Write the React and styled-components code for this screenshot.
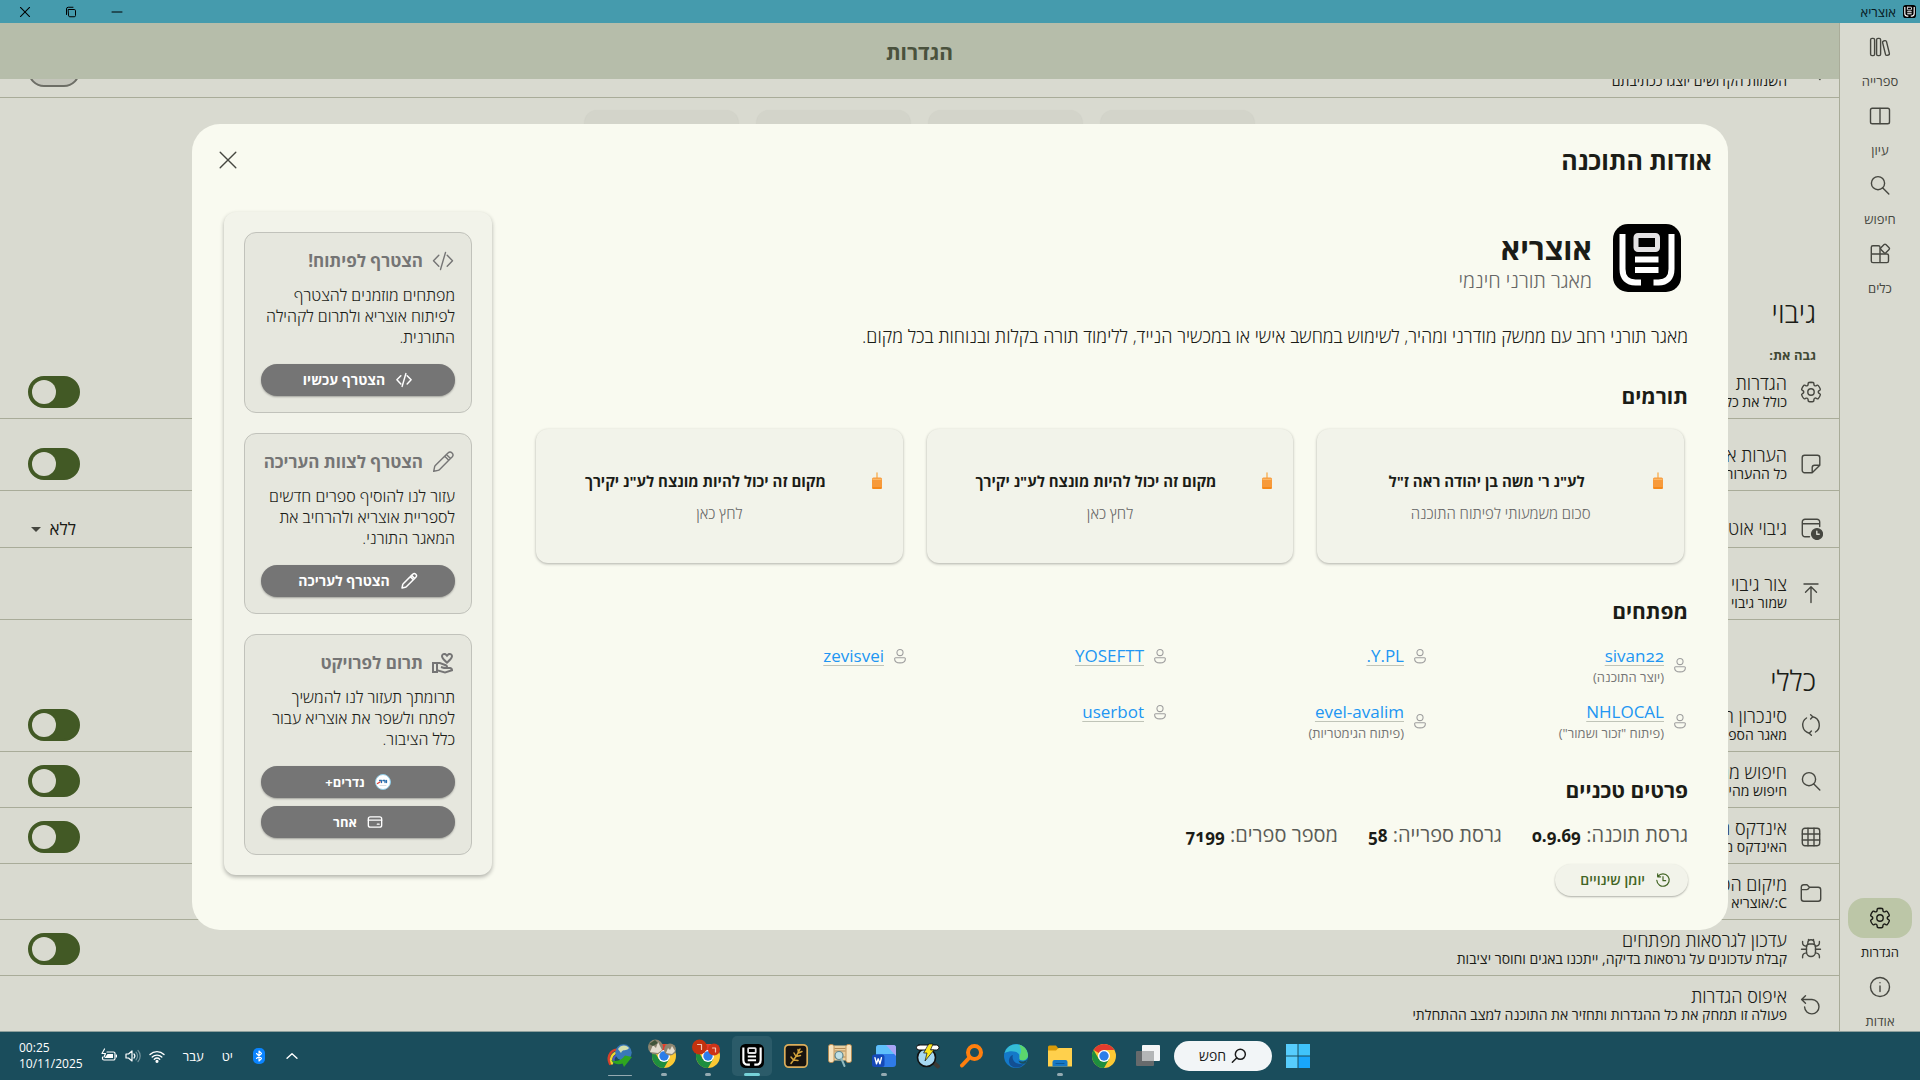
import React from "react";
import styled, { createGlobalStyle } from "styled-components";
import { MdOutlineVolunteerActivism } from "react-icons/md";

const GlobalStyle = createGlobalStyle`
  * {
    box-sizing: border-box;
  }

  body {
    margin: 0;
    font-family: "Open Sans", "Noto Sans", sans-serif;
    color: #1b1c17;
  }

  button,
  select {
    font-family: inherit;
    color: inherit;
    border: none;
    background: none;
    padding: 0;
    cursor: pointer;
  }

  h1,
  h2,
  h3,
  p {
    margin: 0;
  }
`;

const Svg = styled.svg`
  display: block;
  flex: none;
  width: ${(p) => p.$size}px;
  height: ${(p) => p.$size}px;
  fill: none;
  stroke: currentColor;
  stroke-width: ${(p) => p.$stroke};
  stroke-linecap: round;
  stroke-linejoin: round;
`;

const shapes = {
  library: (
    <>
      <rect x="2.6" y="3.4" width="4" height="17.2" rx="1.4" />
      <rect x="8.6" y="3.4" width="4" height="17.2" rx="1.4" />
      <rect x="16" y="5.6" width="4" height="14.8" rx="1.4" transform="rotate(-14 18 13)" />
    </>
  ),
  book: (
    <>
      <rect x="2.5" y="4.3" width="19" height="15.4" rx="1.8" />
      <path d="M12 4.5v15" />
    </>
  ),
  search: (
    <>
      <circle cx="10" cy="10.2" r="6.6" />
      <path d="m14.8 15 6 6" />
    </>
  ),
  tools: (
    <>
      <path d="M12 12V5.3c0-.9-.7-1.6-1.6-1.6H4.9c-.9 0-1.6.7-1.6 1.6V19c0 .9.7 1.6 1.6 1.6h14c.9 0 1.6-.7 1.6-1.6v-5.4c0-.9-.7-1.6-1.6-1.6H3.3M12 12v8.6" />
      <rect x="13.5" y="3.2" width="7" height="7" rx="1.2" transform="rotate(45 17 6.7)" />
    </>
  ),
  settings: (
    <>
      <path d="M12.01 2.25c.74 0 1.47.1 2.18.25.32.07.55.33.59.65l.17 1.53a1.38 1.38 0 0 0 1.92 1.11l1.4-.61c.3-.13.64-.06.85.17a9.8 9.8 0 0 1 2.2 3.8c.1.3 0 .63-.26.82l-1.25.92a1.38 1.38 0 0 0 0 2.22l1.25.92c.26.19.36.52.27.82a9.8 9.8 0 0 1-2.2 3.8.75.75 0 0 1-.85.17l-1.4-.62a1.38 1.38 0 0 0-1.93 1.12l-.17 1.52a.75.75 0 0 1-.58.65 9.5 9.5 0 0 1-4.4 0 .75.75 0 0 1-.57-.65l-.17-1.52a1.38 1.38 0 0 0-1.93-1.11l-1.4.62a.75.75 0 0 1-.85-.18 9.8 9.8 0 0 1-2.2-3.8c-.1-.3 0-.63.27-.82l1.24-.92a1.38 1.38 0 0 0 0-2.22l-1.24-.92a.75.75 0 0 1-.28-.82 9.8 9.8 0 0 1 2.2-3.8c.23-.23.57-.3.86-.17l1.4.62c.4.17.86.15 1.25-.08.38-.22.63-.6.68-1.04l.17-1.53a.75.75 0 0 1 .58-.65c.72-.16 1.45-.24 2.2-.25Z" />
      <circle cx="12" cy="12" r="3.2" />
    </>
  ),
  info: (
    <>
      <circle cx="12" cy="12" r="9.5" />
      <path d="M12 11v5.6M12 7.6v.2" />
    </>
  ),
  note: (
    <path d="M13.2 20.7H5.6A2.4 2.4 0 0 1 3.2 18.3V5.7A2.4 2.4 0 0 1 5.6 3.3H18.4A2.4 2.4 0 0 1 20.8 5.7V13.2L13.2 20.7V15.6A2.4 2.4 0 0 1 15.6 13.2H20.8" />
  ),
  calendar: (
    <>
      <path d="M10.5 20.7H6A2.7 2.7 0 0 1 3.3 18V6A2.7 2.7 0 0 1 6 3.3H18A2.7 2.7 0 0 1 20.7 6V10.5M3.3 7.7H20.7" />
      <circle cx="18" cy="18" r="5.4" fill="currentColor" />
      <path d="M17.8 15.2V18.200H20.200" stroke="#d9dad0" />
    </>
  ),
  upload: <path d="M5 3h14M12 21.5V6M6.500 11.300 12 5.800l5.500 5.500" />,
  sync: (
    <path d="M13.8 3.8A8.4 8.4 0 0 1 16.500 19M10.200 20.200A8.400 8.400 0 0 1 7.500 5M11.600 1.800l2.200 2-2.200 2.200M12.400 18l-2.200 2.200 2.200 2" />
  ),
  grid: (
    <>
      <rect x="3.3" y="3.3" width="17.4" height="17.4" rx="2.6" />
      <path d="M9 3.3v17.4M15 3.3v17.4M3.3 9h17.4M3.3 15h17.4" />
    </>
  ),
  folder: (
    <path d="M2.3 8.3V6A2.5 2.5 0 0 1 4.8 3.7H8L10.5 6.2H19.2A2.5 2.5 0 0 1 21.7 8.7V17.8A2.5 2.5 0 0 1 19.2 20.3H4.8A2.5 2.5 0 0 1 2.3 17.8V8.6H7.7C8.5 8.6 9 8.3 9.4 7.8L10.5 6.2" />
  ),
  bug: (
    <>
      <path d="M7.5 10A3 3 0 0 1 10.5 7H13.5A3 3 0 0 1 16.5 10V15A4.5 4.5 0 0 1 7.5 15Z" />
      <path d="M8.8 7V6a3.2 3.2 0 0 1 6.4 0v1M9.5 3.6V2.5M14.5 3.6V2.5M2.5 12.2h5M16.5 12.2h5M3.6 4.5V6c0 1.8 1.7 3 4 3.3M20.4 4.5V6c0 1.800-1.700 3-4 3.300M3.600 20.800v-1.600c0-1.800 1.700-3 4-3.300M20.400 20.800v-1.600c0-1.800-1.700-3-4-3.300" />
    </>
  ),
  reset: <path d="M6.500 2.700 2.600 6.500l3.900 3.800M2.800 6.500H13A7.200 7.200 0 1 1 5.600 14" />,
  textSearch: (
    <>
      <path d="M3 5h15M3 10h6M3 15h5" />
      <circle cx="15" cy="14" r="4" />
      <path d="m18 17 3 3.500" />
    </>
  ),
  code: <path d="m7.800 6.300-5.300 5.500 5.300 5.500M16.200 6.300l5.300 5.500-5.300 5.500M14.500 3.500 9.500 20.500" />,
  pencil: (
    <path d="M15.4 4.5 4.3 15.6C3.9 16 3.7 16.4 3.6 16.9L2.7 21.3 7.1 20.4C7.6 20.3 8 20.1 8.4 19.7L19.5 8.6M15.4 4.5L17 2.9A2.9 2.9 0 0 1 21.1 7L19.5 8.6ZM13.7 6.2L17.8 10.3" />
  ),
  card: (
    <>
      <rect x="2" y="4.2" width="20" height="15.6" rx="3" />
      <path d="M2 9.3h20M15.5 15.3h2.7" />
    </>
  ),
  history: <path d="M4.5 6.5A9.3 9.3 0 1 1 2.7 12.5M4 2.8V7.2H8.4M12 7v6h4" />,
  person: (
    <>
      <circle cx="12" cy="6.800" r="4.600" />
      <path d="M5.500 14.500H18.500A1.600 1.600 0 0 1 20.100 16.100C20.100 20 16.500 22.300 12 22.300S3.900 20 3.900 16.100A1.600 1.600 0 0 1 5.500 14.500Z" />
    </>
  ),
  close: <path d="m4.2 4.2 15.6 15.6M19.8 4.2 4.2 19.8" />,
  minimize: <path d="M2 12h20" />,
  restore: (
    <path d="M7 7h11.500A2.500 2.500 0 0 1 21 9.500V19A2.500 2.500 0 0 1 18.500 21.500H9.500A2.500 2.500 0 0 1 7 19ZM3 17V6A3.500 3.500 0 0 1 6.500 2.500H16" />
  ),
  chevron: <path d="m3.500 16 8.500-8 8.500 8" />,
};

const Icon = ({ name, size = 24, stroke = 1.4 }) => (
  <Svg viewBox="0 0 24 24" $size={size} $stroke={stroke} aria-hidden="true">
    {shapes[name]}
  </Svg>
);

const Logo = ({ size }) => (
  <Svg viewBox="0 0 68 68" $size={size} $stroke={0} aria-hidden="true">
    <rect width="68" height="68" rx="15" fill="#000" />
    <path
      d="M9.500 10v35c0 9 5 13.500 13 13.500h5.500M58.500 10v35c0 9-5 13.500-13 13.500h-5"
      stroke="#fff"
      strokeWidth="6"
      strokeLinecap="butt"
    />
    <rect x="23" y="11.500" width="21.500" height="14" rx="2" stroke="#e3e1e3" strokeWidth="5" />
    <path d="M22 35.500h23.500M22 46h23.500" stroke="#fff" strokeWidth="6" strokeLinecap="butt" />
  </Svg>
);

const Candle = () => (
  <Svg viewBox="0 0 20 20" $size={20} $stroke={0} aria-hidden="true">
    <path d="M10 2v5" stroke="#f6b96a" strokeWidth="1.6" />
    <rect x="5" y="6.5" width="10" height="11.500" rx="1.500" fill="#f79a3b" />
    <path d="M6 8.300h8" stroke="#fbb768" strokeWidth="1.200" />
    <path d="M6 17h8" stroke="#f58410" strokeWidth="1.400" />
  </Svg>
);

const Screen = styled.div`
  height: 100vh;
  display: flex;
  flex-direction: column;
  overflow: hidden;
`;

const TitleBar = styled.header`
  flex: none;
  height: 23px;
  padding: 0 4px 0 18px;
  display: flex;
  align-items: center;
  justify-content: space-between;
  background: #459bad;
  color: #06181c;
  font-size: 13px;
  line-height: 16px;
`;

const AppName = styled.div`
  display: flex;
  align-items: center;
  gap: 7px;
`;

const WindowControls = styled.div`
  display: flex;
  flex-direction: row-reverse;
  gap: 32px;

  button {
    width: 14px;
    height: 14px;
    display: grid;
    place-items: center;
    color: #000;
  }
`;

const Window = styled.div`
  position: relative;
  flex: 1;
  min-height: 0;
  display: flex;
  background: #d9dad0;
`;

const NavRail = styled.nav`
  flex: none;
  width: 81px;
  padding: 4px 0 2px;
  border-left: 1px solid #a9ac99;
  display: flex;
  flex-direction: column;
  gap: 7px;
`;

const NavSpacer = styled.div`
  flex: 1;
`;

const NavItem = styled.button`
  display: flex;
  flex-direction: column;
  align-items: center;
  gap: 6px;
  font-size: 13px;
  line-height: 16px;
  color: ${(p) => (p.$active ? "#1b1c17" : "#464740")};
`;

const NavPill = styled.span`
  width: 64px;
  height: 40px;
  border-radius: 16px;
  display: grid;
  place-items: center;
  background: ${(p) => (p.$active ? "#bcc6a7" : "transparent")};
`;

const Settings = styled.main`
  flex: 1;
  min-width: 0;
  display: flex;
  flex-direction: column;
`;

const SettingsHeader = styled.h1`
  flex: none;
  height: 56px;
  padding-top: 2px;
  display: grid;
  place-items: center;
  background: #b6bdaa;
  color: #4a523d;
  font-size: 21px;
  line-height: 28px;
`;

const Scroller = styled.div`
  flex: 1;
  min-height: 0;
  overflow: hidden;
`;

/* the list is scrolled part of the way down */
const SettingsList = styled.div`
  margin-top: -37px;
`;

const Shortcuts = styled.div`
  display: flex;
  justify-content: center;
  gap: 19px;
  padding: 12px 0 46px;
`;

const Shortcut = styled.div`
  width: 153px;
  height: 140px;
  border-radius: 12px;
  background: #d3d4ca;
  box-shadow: 0 1px 2px rgba(0, 0, 0, 0.12);
`;

const GroupTitle = styled.h2`
  padding: ${(p) => (p.$spaced ? "44px" : 0)} 23px 0;
  font-size: 28px;
  line-height: 32px;
  font-weight: 300;
`;

const GroupLabel = styled.h3`
  padding: 19px 23px 0;
  font-size: 13px;
  line-height: 16px;
  color: #414935;
`;

const SettingRow = styled.div`
  height: ${(p) => (p.$single ? 41 : 56)}px;
  margin-top: ${(p) => (p.$gap ? 16 : 0)}px;
  padding: 2px 16px 0 28px;
  border-bottom: 1px solid #a9ac99;
  display: flex;
  align-items: center;
  gap: 12px;
  color: #464740;
`;

const SettingText = styled.div`
  flex: 1;
  color: #1b1c17;
  font-size: 14px;
  line-height: 18px;

  strong {
    display: block;
    font-size: 18px;
    line-height: 20px;
    font-weight: 300;
  }
`;

const Switch = styled.input`
  appearance: none;
  flex: none;
  position: relative;
  width: 52px;
  height: 32px;
  margin: 0;
  border-radius: 16px;
  border: 2px solid ${(p) => (p.defaultChecked ? "#425925" : "#6d6e66")};
  background: ${(p) => (p.defaultChecked ? "#425925" : "#c4c5bb")};

  &:checked::after {
    content: "";
    position: absolute;
    left: 2px;
    top: 2px;
    width: 24px;
    height: 24px;
    border-radius: 50%;
    background: #d9dad0;
  }
`;

const SelectBox = styled.label`
  display: flex;
  align-items: center;
  gap: 8px;
  padding: 2px 0 0 3px;

  select {
    appearance: none;
    font-size: 17px;
    line-height: 24px;
    color: #1b1c17;
  }
`;

const Arrow = styled.span`
  border: 5px solid transparent;
  border-top-color: #464740;
  border-bottom: none;
`;

const Overlay = styled.div`
  position: absolute;
  inset: 0;
  display: grid;
  place-items: center;
`;

const Dialog = styled.section`
  width: 80%;
  height: 80%;
  border-radius: 28px;
  background: #f9faf0;
`;

const DialogHeader = styled.div`
  height: 72px;
  padding: 0 16px 0 24px;
  display: flex;
  align-items: center;
  justify-content: space-between;

  h2 {
    font-size: 25px;
    line-height: 32px;
  }
`;

const CloseButton = styled.button`
  width: 24px;
  height: 24px;
  color: #464740;
`;

const DialogBody = styled.div`
  display: flex;
  align-items: flex-start;
  gap: 40px;
  padding: 16px 40px 0 32px;
`;

const About = styled.div`
  flex: 1;
  min-width: 0;
  padding-top: 6px;
`;

const Brand = styled.div`
  height: 80px;
  display: flex;
  align-items: center;
  gap: 14px;
`;

const LogoBox = styled.div`
  width: 82px;
  height: 80px;
  display: grid;
  place-items: center;
`;

const BrandText = styled.div`
  padding-top: 8px;
  font-size: 20px;
  line-height: 26px;
  font-weight: 300;
  color: #666;

  strong {
    display: block;
    font-size: 30px;
    line-height: 38px;
    font-weight: 700;
    color: #1b1c17;
  }
`;

const Intro = styled.p`
  margin-top: 26px;
  font-size: 18px;
  line-height: 24px;
  font-weight: 300;
`;

const SectionTitle = styled.h3`
  margin: 34px 0 19px;
  font-size: 21px;
  line-height: 28px;
`;

const Donors = styled.div`
  display: grid;
  grid-template-columns: repeat(3, 1fr);
  gap: 24px;
  padding: 0 4px;
`;

const DonorCard = styled.article`
  height: 134px;
  padding: 2px 16px 0;
  border-radius: 12px;
  background: #f2f3ea;
  box-shadow: 0 1px 3px rgba(0, 0, 0, 0.3);
  display: flex;
  flex-direction: column;
  justify-content: center;
  gap: 11px;
  text-align: center;
  font-size: 15px;
  line-height: 20px;
  font-weight: 300;
  color: #666;
`;

const DonorTitle = styled.div`
  display: flex;
  align-items: center;
  gap: 8px;
  color: #1b1c17;
  line-height: 22px;

  strong {
    flex: 1;
    font-weight: 700;
  }
`;

const Developers = styled.ul`
  margin: 0;
  padding: 0;
  list-style: none;
  display: grid;
  grid-template-columns: repeat(auto-fill, 244px);
  gap: 14px 16px;
`;

const Developer = styled.li`
  display: flex;
  align-items: center;
  align-self: start;
  gap: 8px;
  color: #9e9e9e;
`;

const DeveloperText = styled.div`
  font-size: 13px;
  line-height: 18px;
  color: #757575;
`;

const DeveloperLink = styled.a`
  display: block;
  width: fit-content;
  font-size: 17px;
  line-height: 24px;
  color: #2196f3;
  text-decoration: underline;
  text-decoration-color: #c0c4b8;
  text-underline-offset: 3px;
  font-variant-numeric: oldstyle-nums;
`;

const Stats = styled.div`
  display: flex;
  gap: 30px;
  font-size: 20px;
  line-height: 24px;
  color: #5b5c57;

  strong {
    font-size: 17px;
    color: #1b1c17;
    font-variant-numeric: oldstyle-nums;
  }
`;

const ChangelogButton = styled.button`
  height: 32px;
  margin-top: 16px;
  padding: 0 17px 0 25px;
  border-radius: 16px;
  display: flex;
  align-items: center;
  gap: 10px;
  background: #f2f3ea;
  box-shadow: 0 1px 2px rgba(0, 0, 0, 0.3);
  color: #436525;
  font-size: 14px;
  line-height: 20px;
  font-weight: 600;
`;

const JoinPanel = styled.aside`
  flex: none;
  width: 268px;
  padding: 20px;
  border-radius: 12px;
  background: #f2f3ea;
  box-shadow: 0 2px 4px rgba(0, 0, 0, 0.3);
  display: flex;
  flex-direction: column;
  gap: 20px;
`;

const JoinCard = styled.article`
  padding: 16px;
  border: 1px solid #c1c2bb;
  border-radius: 12px;
  background: #e6e7de;
  font-size: 16px;
  line-height: 21px;
  font-weight: 300;
`;

const JoinTitle = styled.h3`
  display: flex;
  align-items: center;
  gap: 8px;
  margin-bottom: 12px;
  font-size: 17px;
  line-height: 24px;
  color: #757575;
  white-space: nowrap;
`;

const JoinActions = styled.div`
  display: flex;
  flex-direction: column;
  gap: 8px;
  margin-top: 16px;
`;

const JoinButton = styled.button`
  height: 32px;
  border-radius: 16px;
  display: flex;
  align-items: center;
  justify-content: center;
  gap: 10px;
  background: #757575;
  box-shadow: 0 1px 2px rgba(0, 0, 0, 0.3);
  color: #fff;
  font-size: ${(p) => (p.$small ? 13 : 14)}px;
  line-height: 20px;
  font-weight: 700;
`;

const TaskBar = styled.footer`
  flex: none;
  height: 49px;
  border-top: 1px solid #8d9f9c;
  display: grid;
  grid-template-columns: 1fr auto 1fr;
  align-items: center;
  background: #1a4d5c;
  color: #fff;
`;

const TaskButtons = styled.div`
  grid-column: 2;
  padding-right: 2px;
  display: flex;
  align-items: center;
  gap: 4px;
`;

const TaskButton = styled.button`
  width: 40px;
  height: 40px;
  border-radius: 5px;
  display: flex;
  flex-direction: column;
  align-items: center;
  justify-content: flex-end;
  gap: 5px;
  background: ${(p) => (p.$active ? "#2b5b69" : "transparent")};
`;

const Indicator = styled.span`
  width: ${(p) => ({ active: 16, wide: 24 }[p.$kind] || 6)}px;
  height: ${(p) => (p.$kind === "wide" ? 1 : 3)}px;
  margin-top: ${(p) => (p.$kind === "wide" ? 2 : 0)}px;
  border-radius: 2px;
  background: ${(p) => (p.$kind === "active" ? "#76d2d8" : "#94aab1")};
  visibility: ${(p) => (p.$kind ? "visible" : "hidden")};
`;

const SearchPill = styled.button`
  width: 98px;
  height: 30px;
  margin: 0 2px;
  border-radius: 15px;
  display: flex;
  align-items: center;
  justify-content: center;
  gap: 5px;
  background: #f2f5f7;
  color: #1b1b1b;
  font-size: 14px;
  line-height: 20px;
`;

const Tray = styled.div`
  grid-column: 3;
  justify-self: end;
  display: flex;
  align-items: center;
  gap: 18px;
  padding-left: 19px;
  font-size: 13px;
  line-height: 16px;
`;

const QuickStatus = styled.div`
  display: flex;
  align-items: center;
  gap: 8px;
`;

const Clock = styled.time`
  direction: ltr;
  font-size: 12px;
`;

const TaskArt = ({ children }) => (
  <Svg viewBox="0 0 24 24" $size={24} $stroke={0} aria-hidden="true">
    {children}
  </Svg>
);

const chromeShapes = (
  <>
    <circle cx="12" cy="12" r="12" fill="#fcc934" />
    <path d="M12 12 1.6 6A12 12 0 0 1 22.400 6H12Z" fill="#e33b2e" />
    <path d="M1.600 6A12 12 0 0 0 12 24L17.200 15 6.800 15Z" fill="#1e8e3e" />
    <circle cx="12" cy="12" r="6" fill="#fff" />
    <circle cx="12" cy="12" r="4.700" fill="#2b7de9" />
  </>
);

const taskItems = [
  {
    label: "תצוגת משימות",
    art: (
      <>
        <rect x="6" y="1" width="18" height="16" rx="1" fill="#f4f5f6" />
        <rect y="7" width="18" height="15" rx="1" fill="#666a6c" />
        <rect x="6" y="7" width="12" height="10" fill="#b4b6b7" />
      </>
    ),
  },
  { label: "Chrome", art: chromeShapes },
  {
    label: "סייר הקבצים",
    kind: "open",
    art: (
      <>
        <path d="M0 3a1.500 1.500 0 0 1 1.500-1.500H8L10 4v6H0Z" fill="#d99b08" />
        <path d="M0 6.500H8L10.500 4H24V22.500H0Z" fill="#ffd04c" />
        <path d="M4.500 22.500V18A2 2 0 0 1 6.500 16H17.500A2 2 0 0 1 19.500 18V22.500Z" fill="#1878c4" />
        <path d="M8 19.500h8" stroke="#0c5795" strokeWidth="1.200" />
      </>
    ),
  },
  {
    label: "Edge",
    art: (
      <>
        <circle cx="12" cy="12" r="12" fill="#1479c9" />
        <path
          d="M.5 9A12 12 0 0 1 24 11C24 15 20.500 17 17 16 14.500 15.500 15.500 14 15.500 12 15.500 8 8 5.500 .5 9Z"
          fill="#35bdd6"
        />
        <path d="M15 .500A12 12 0 0 1 24 11C24 15 20.500 17 17 16 15 15.500 16 14 15.500 11.500 18 8 17 4 15 .500Z" fill="#5bd66d" />
        <path d="M9 11C7 16 12 21.500 20 20 15 26 4 24 5 16 5.500 13 7 11.500 9 11Z" fill="#124f93" />
        <path d="M14.500 16.500c2.500 1.800 6.500 1 9-1.300l-2 4c-3.500 1.500-6 .300-7-2.700Z" fill="#1a4d5c" />
      </>
    ),
  },
  {
    label: "Everything",
    art: (
      <>
        <circle cx="14.500" cy="8.500" r="6.500" stroke="#ff7f0e" strokeWidth="4" />
        <path d="M9.500 13.500 2 21.500" stroke="#ff7f0e" strokeWidth="4" strokeLinecap="round" />
      </>
    ),
  },
  {
    label: "חיפוש מהיר",
    art: (
      <>
        <path d="M17 18l5 4.500" stroke="#3d3a35" strokeWidth="4" />
        <circle cx="10.500" cy="13.500" r="9" fill="#a5d8f2" stroke="#111" strokeWidth="1.600" />
        <rect x=".5" y="1" width="22.500" height="5" rx="2.500" fill="#fff" stroke="#111" strokeWidth="1" />
        <path d="M13 0H17L14.500 6H18L9 17 11 9H8Z" fill="#fbe61c" stroke="#111" strokeWidth=".7" />
      </>
    ),
  },
  {
    label: "Word",
    kind: "open",
    art: (
      <>
        <rect x="4" y="1" width="20" height="22" rx="3" fill="#2f7be8" />
        <path d="M4 4a3 3 0 0 1 3-3H21a3 3 0 0 1 3 3V10H4Z" fill="#5fc0fb" />
        <path d="M14 1h7a3 3 0 0 1 3 3v8Z" fill="#a9a4f6" />
        <rect y="10.500" width="12.500" height="12.500" rx="2.500" fill="#1549b8" />
        <path d="m3 13.800 1.500 6 1.700-5 1.700 5 1.500-6" stroke="#fff" strokeWidth="1.400" />
      </>
    ),
  },
  {
    label: "מאגר כתבים",
    art: (
      <>
        <rect x="2" y="1.500" width="20" height="15" fill="#e9cf9f" />
        <path d="M7 4.500h10M7 7h10M7 13h10" stroke="#b38a55" strokeWidth="1" />
        <rect x=".5" y=".5" width="5.500" height="18" rx="2" fill="#f6e3be" stroke="#b98646" strokeWidth=".8" />
        <rect x="18" y=".5" width="5.500" height="18" rx="2" fill="#f6e3be" stroke="#b98646" strokeWidth=".8" />
        <circle cx="11" cy="11.500" r="4" fill="#bfe0e6" stroke="#5f858c" strokeWidth="1.200" />
        <path d="m13.500 15 3 7" stroke="#8fb8bd" strokeWidth="2" />
      </>
    ),
  },
  {
    label: "ספרייה",
    art: (
      <>
        <rect x=".8" y=".8" width="22.400" height="22.400" rx="4" fill="#17130f" stroke="#dcae5c" strokeWidth="1.700" />
        <path
          d="M7 19.500C10 15.500 13 12 16 5M9.500 16 7 13M9.500 16l4.500 .5M12 12.500 10 9M12 12.500l4.500-1M14.500 9l-.5-3.500M14.500 9l3.500-1.500"
          stroke="#d4a43c"
          strokeWidth="1.500"
        />
      </>
    ),
  },
  { label: "אוצריא", kind: "active", logo: true },
  {
    label: "Chrome ד",
    kind: "open",
    art: (
      <>
        {chromeShapes}
        <circle cx="3.500" cy="3" r="7.500" fill="#c3320f" />
        <circle cx="18" cy="5.500" r="6" fill="#cc3318" />
        <path d="M1.500 .5h4v5M16.500 4h3v4" stroke="#f3c3b2" strokeWidth="1.200" />
      </>
    ),
  },
  {
    label: "Chrome",
    kind: "open",
    art: (
      <>
        {chromeShapes}
        <circle cx="3.500" cy="3" r="7.500" fill="#8d8570" />
        <path d="M-2 8 1 1l3 3 2-6 4 8-4 3Z" fill="#e4ddcf" />
        <path d="M-3 0 3-4 6-1 1 2Z" fill="#41553a" />
        <circle cx="18" cy="5.500" r="6" fill="#8d8570" />
        <path d="m14 9 2-5 2 2 2-4 3 5-3 3Z" fill="#e4ddcf" />
      </>
    ),
  },
  {
    label: "IDM",
    kind: "wide",
    art: (
      <>
        <path d="M2 20C-2 12 4 4 12 6" stroke="#d6402a" strokeWidth="2.400" />
        <path d="M4 19.500C1 13 6 7 13 8" stroke="#f0d62e" strokeWidth="2.400" />
        <path d="M6 18C4 14 8 9.500 13 10" stroke="#4b55c0" strokeWidth="2" />
        <circle cx="15.500" cy="8.500" r="8.200" fill="#3a78b8" />
        <path d="M10 5c3-5 9-4 11-1-3 4-6 0-8 5Z" fill="#d3dfae" />
        <path d="M3 16c6 2.500 11 0 14-4.500l7 1.500-8 10-1.500-3.500c-4 1.500-9 .500-11.500-3.500Z" fill="#2fa61f" />
      </>
    ),
  },
];

const TaskArtBox = styled.span`
  svg {
    overflow: visible;
  }
`;

const navItems = [
  { icon: "library", label: "ספרייה" },
  { icon: "book", label: "עיון" },
  { icon: "search", label: "חיפוש" },
  { icon: "tools", label: "כלים" },
];

const backupRows = [
  { icon: "settings", title: "הגדרות", text: "כולל את כל ההגדרות", on: true },
  { icon: "note", title: "הערות אישיות", text: "כל ההערות האישיות", on: true, gap: true },
  { icon: "calendar", title: "גיבוי אוטומטי", select: true, gap: true },
  { icon: "upload", title: "צור גיבוי", text: "שמור גיבוי לקובץ", gap: true },
];

const generalRows = [
  { icon: "sync", title: "סינכרון הספרייה", text: "מאגר הספרים יתעדכן", on: true },
  { icon: "search", title: "חיפוש מהיר", text: "חיפוש מהיר באינדקס", on: true },
  { icon: "grid", title: "אינדקס החיפוש", text: "האינדקס מתעדכן", on: true },
  { icon: "folder", title: "מיקום הספרייה", text: "C:/אוצריא" },
  {
    icon: "bug",
    title: "עדכון לגרסאות מפתחים",
    text: "קבלת עדכונים על גרסאות בדיקה, ייתכנו באגים וחוסר יציבות",
    on: true,
  },
  {
    icon: "reset",
    title: "איפוס הגדרות",
    text: "פעולה זו תמחק את כל ההגדרות ותחזיר את התוכנה למצב ההתחלתי",
  },
];

const donors = [
  { title: 'לע"נ ר\' משה בן יהודה ראה ז"ל', text: "סכום משמעותי לפיתוח התוכנה" },
  { title: 'מקום זה יכול להיות מונצח לע"נ יקירך', text: "לחץ כאן" },
  { title: 'מקום זה יכול להיות מונצח לע"נ יקירך', text: "לחץ כאן" },
];

const developers = [
  { name: "sivan22", role: "(יוצר התוכנה)" },
  { name: "Y.PL." },
  { name: "YOSEFTT" },
  { name: "zevisvei" },
  { name: "NHLOCAL", role: '(פיתוח "זכור ושמור")' },
  { name: "evel-avalim", role: "(פיתוח הגימטריות)" },
  { name: "userbot" },
];

const stats = [
  ["גרסת תוכנה:", "0.9.69"],
  ["גרסת ספרייה:", "58"],
  ["מספר ספרים:", "7199"],
];

const Row = ({ icon, title, text, on, off, gap, select }) => (
  <SettingRow $gap={gap} $single={select}>
    <Icon name={icon} />
    <SettingText>
      <strong>{title}</strong>
      {text}
    </SettingText>
    {(on || off) && (
      <Switch type="checkbox" role="switch" aria-label={title} defaultChecked={!!on} />
    )}
    {select && (
      <SelectBox>
        <select aria-label={title}>
          <option>ללא</option>
        </select>
        <Arrow />
      </SelectBox>
    )}
  </SettingRow>
);

const NavLink = ({ icon, label, active }) => (
  <NavItem type="button" $active={active}>
    <NavPill $active={active}>
      <Icon name={icon} />
    </NavPill>
    {label}
  </NavItem>
);

const NedarimMark = () => (
  <Svg viewBox="0 0 16 16" $size={16} $stroke={0} aria-hidden="true">
    <circle cx="8" cy="8" r="7.500" fill="#fff" stroke="#8fcbe6" strokeWidth="1" />
    <path d="M4.500 6.500h2v2M8 6.500h2v2M11.500 6.500v2" stroke="#2b6fae" strokeWidth="1.300" />
    <path d="M2.500 9.500 5 8" stroke="#e0463c" strokeWidth="1.400" />
    <path d="M5 11.500h6" stroke="#cfd6da" strokeWidth=".8" />
  </Svg>
);

const AboutDialog = () => (
  <Dialog role="dialog" aria-labelledby="about-title">
    <DialogHeader>
      <h2 id="about-title">אודות התוכנה</h2>
      <CloseButton type="button" aria-label="סגור">
        <Icon name="close" />
      </CloseButton>
    </DialogHeader>
    <DialogBody>
      <About>
        <Brand>
          <LogoBox>
            <Logo size={68} />
          </LogoBox>
          <BrandText>
            <strong>אוצריא</strong>
            מאגר תורני חינמי
          </BrandText>
        </Brand>
        <Intro>
          מאגר תורני רחב עם ממשק מודרני ומהיר, לשימוש במחשב אישי או במכשיר הנייד,
          ללימוד תורה בקלות ובנוחות בכל מקום.
        </Intro>
        <SectionTitle>תורמים</SectionTitle>
        <Donors>
          {donors.map((donor, i) => (
            <DonorCard key={i}>
              <DonorTitle>
                <Candle />
                <strong>{donor.title}</strong>
              </DonorTitle>
              {donor.text}
            </DonorCard>
          ))}
        </Donors>
        <SectionTitle>מפתחים</SectionTitle>
        <Developers>
          {developers.map((dev) => (
            <Developer key={dev.name}>
              <Icon name="person" size={16} stroke={1.6} />
              <DeveloperText>
                <DeveloperLink href="#">{dev.name}</DeveloperLink>
                {dev.role}
              </DeveloperText>
            </Developer>
          ))}
        </Developers>
        <SectionTitle>פרטים טכניים</SectionTitle>
        <Stats>
          {stats.map(([label, value]) => (
            <span key={label}>
              {label} <strong>{value}</strong>
            </span>
          ))}
        </Stats>
        <ChangelogButton type="button">
          <Icon name="history" size={16} stroke={1.8} />
          יומן שינויים
        </ChangelogButton>
      </About>
      <JoinPanel>
        <JoinCard>
          <JoinTitle>
            <Icon name="code" />
            הצטרף לפיתוח!
          </JoinTitle>
          מפתחים מוזמנים להצטרף לפיתוח אוצריא ולתרום לקהילה התורנית.
          <JoinActions>
            <JoinButton type="button">
              <Icon name="code" size={18} stroke={2} />
              הצטרף עכשיו
            </JoinButton>
          </JoinActions>
        </JoinCard>
        <JoinCard>
          <JoinTitle>
            <Icon name="pencil" />
            הצטרף לצוות העריכה
          </JoinTitle>
          עזור לנו להוסיף ספרים חדשים לספריית אוצריא ולהרחיב את המאגר התורני.
          <JoinActions>
            <JoinButton type="button">
              <Icon name="pencil" size={18} stroke={2} />
              הצטרף לעריכה
            </JoinButton>
          </JoinActions>
        </JoinCard>
        <JoinCard>
          <JoinTitle>
            <MdOutlineVolunteerActivism size={24} />
            תרום לפרויקט
          </JoinTitle>
          תרומתך תעזור לנו להמשיך לפתח ולשפר את אוצריא עבור כלל הציבור.
          <JoinActions>
            <JoinButton type="button" $small>
              <NedarimMark />
              נדרים+
            </JoinButton>
            <JoinButton type="button" $small>
              <Icon name="card" size={16} stroke={2} />
              אחר
            </JoinButton>
          </JoinActions>
        </JoinCard>
      </JoinPanel>
    </DialogBody>
  </Dialog>
);

const App = () => (
  <Screen dir="rtl" lang="he">
    <GlobalStyle />
    <TitleBar>
      <AppName>
        <Logo size={13} />
        אוצריא
      </AppName>
      <WindowControls>
        <button type="button" aria-label="סגור חלון">
          <Icon name="close" size={14} stroke={1.8} />
        </button>
        <button type="button" aria-label="שחזר">
          <Icon name="restore" size={12} stroke={2} />
        </button>
        <button type="button" aria-label="מזער">
          <Icon name="minimize" size={12} stroke={2} />
        </button>
      </WindowControls>
    </TitleBar>
    <Window>
      <NavRail>
        {navItems.map((item) => (
          <NavLink key={item.icon} {...item} />
        ))}
        <NavSpacer />
        <NavLink icon="settings" label="הגדרות" active />
        <NavLink icon="info" label="אודות" />
      </NavRail>
      <Settings>
        <SettingsHeader>הגדרות</SettingsHeader>
        <Scroller>
          <SettingsList>
            <Row icon="textSearch" title="שמות הקודש" text="השמות הקדושים יוצגו ככתיבתם" off />
            <Shortcuts>
              <Shortcut />
              <Shortcut />
              <Shortcut />
              <Shortcut />
            </Shortcuts>
            <GroupTitle>גיבוי</GroupTitle>
            <GroupLabel>גבה את:</GroupLabel>
            {backupRows.map((row) => (
              <Row key={row.icon} {...row} />
            ))}
            <GroupTitle $spaced>כללי</GroupTitle>
            {generalRows.map((row) => (
              <Row key={row.icon} {...row} />
            ))}
          </SettingsList>
        </Scroller>
      </Settings>
      <Overlay>
        <AboutDialog />
      </Overlay>
    </Window>
    <TaskBar>
      <TaskButtons>
        <TaskButton type="button" aria-label="התחל">
          <TaskArt>
            <path d="M0 0H11.500V11.500H0ZM0 12.500H11.500V24H0Z" fill="#57cdfd" />
            <path d="M12.500 0H24V11.500H12.500Z" fill="#3fc3fb" />
            <path d="M12.500 12.500H24V24H12.500Z" fill="#18a6fb" />
          </TaskArt>
          <Indicator />
        </TaskButton>
        <SearchPill type="button">
          <Svg viewBox="0 0 24 24" $size={16} $stroke={2.2} aria-hidden="true">
            <circle cx="14" cy="9.500" r="7.500" />
            <path d="m8.500 15-6.500 6.500" />
          </Svg>
          חפש
        </SearchPill>
        {taskItems.map((item, i) => (
          <TaskButton
            key={i}
            type="button"
            aria-label={item.label}
            $active={item.kind === "active"}
          >
            <TaskArtBox>
              {item.logo ? <Logo size={24} /> : <TaskArt>{item.art}</TaskArt>}
            </TaskArtBox>
            <Indicator $kind={item.kind} />
          </TaskButton>
        ))}
      </TaskButtons>
      <Tray>
        <Icon name="chevron" size={14} stroke={2.4} />
        <Svg viewBox="0 0 12 16" $size={16} $stroke={1.1} aria-hidden="true">
          <rect width="12" height="16" rx="5" fill="#0a84ff" stroke="none" />
          <path d="m3.500 5.500 5 5L6 13V3l2.500 2.500-5 5" />
        </Svg>
        <span>יט</span>
        <span>עבר</span>
        <QuickStatus>
          <Svg viewBox="0 0 16 16" $size={16} $stroke={1.4} aria-hidden="true">
            <path d="M1 6.500a10 10 0 0 1 14 0M3.200 9a7 7 0 0 1 9.600 0M5.300 11.300a4 4 0 0 1 5.400 0" />
            <circle cx="8" cy="13.300" r=".9" fill="#fff" />
          </Svg>
          <Svg viewBox="0 0 16 16" $size={16} $stroke={1.2} aria-hidden="true">
            <path d="M1 6h2.500L7 3v10L3.500 10H1ZM9 6a3 3 0 0 1 0 4" />
            <path d="M11 4.200a5.500 5.500 0 0 1 0 7.600M13 2.500a8 8 0 0 1 0 11" opacity=".4" />
          </Svg>
          <Svg viewBox="0 0 16 16" $size={16} $stroke={1.2} aria-hidden="true">
            <path d="M6 4h6.500A1.500 1.500 0 0 1 14 5.500v5a1.500 1.500 0 0 1-1.500 1.500H3a1.500 1.500 0 0 1-1.500-1.500V9M15.500 7v2" />
            <path d="M6.500 6H12v4H3.500Z" fill="#fff" stroke="none" />
            <path d="M3.500 1 1 5.500h3.500L3 9" />
          </Svg>
        </QuickStatus>
        <Clock>
          00:25
          <br />
          10/11/2025
        </Clock>
      </Tray>
    </TaskBar>
  </Screen>
);

export default App;
